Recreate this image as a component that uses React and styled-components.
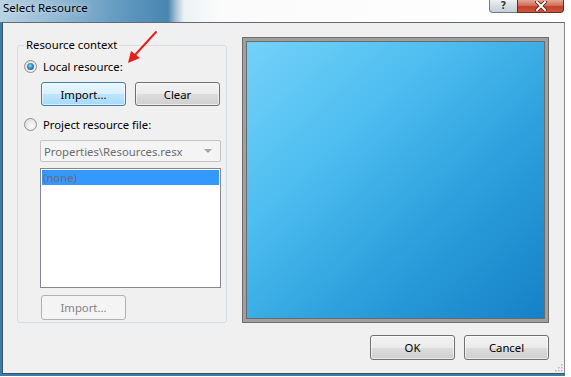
import React from 'react';
import styled, { createGlobalStyle } from 'styled-components';

const GlobalStyle = createGlobalStyle`
  html, body {
    margin: 0;
    padding: 0;
    background: #ffffff;
  }
  body {
    width: 571px;
    height: 377px;
    overflow: hidden;
    font-family: "Segoe UI", "Noto Sans", "Liberation Sans", sans-serif;
    font-size: 11.3px;
    color: #000;
  }
  * { box-sizing: border-box; }
`;

function App() {
  return (
    <>
      <GlobalStyle />
      <Window>
        <TitleBar>
          <Title>Select Resource</Title>
          <CaptionButtons>
            <HelpButton>?</HelpButton>
            <CloseButton aria-label="Close">
              <svg width="12" height="10" viewBox="0 0 12 10">
                <path d="M2 1 L10 9 M10 1 L2 9" stroke="#5a1a10" strokeWidth="3.6" strokeLinecap="square" />
                <path d="M2 1 L10 9 M10 1 L2 9" stroke="#ffffff" strokeWidth="2" strokeLinecap="square" />
              </svg>
            </CloseButton>
          </CaptionButtons>
        </TitleBar>
        <Frame>
          <Client>
            <TopRow>
              <GroupBox>
                <Legend>Resource context</Legend>
                <RadioRow>
                  <Radio checked />
                  <span>Local resource:</span>
                </RadioRow>
                <ButtonRow>
                  <Button primary>Import...</Button>
                  <Button>Clear</Button>
                </ButtonRow>
                <RadioRow spaced>
                  <Radio />
                  <span>Project resource file:</span>
                </RadioRow>
                <Indent>
                  <Combo>
                    <span>Properties\Resources.resx</span>
                    <Caret />
                  </Combo>
                  <ListBox>
                    <ListItem selected>(none)</ListItem>
                  </ListBox>
                  <Button disabled>Import...</Button>
                </Indent>
              </GroupBox>
              <Preview>
                <PreviewImage />
              </Preview>
            </TopRow>
            <DialogButtons>
              <Button wide>OK</Button>
              <Button wide>Cancel</Button>
            </DialogButtons>
            <Grip width="9" height="9" viewBox="0 0 9 9">
              {[[7, 1], [4, 4], [7, 4], [1, 7], [4, 7], [7, 7]].map(([x, y], i) => (
                <rect key={i} x={x} y={y} width="1.5" height="1.5" fill="#b8b8b8" />
              ))}
            </Grip>
          </Client>
        </Frame>
        <Arrow width="40" height="40" viewBox="0 0 40 40">
          <line x1="35" y1="2" x2="14" y2="25" stroke="#e51e1e" strokeWidth="2" strokeLinecap="round" />
          <polygon points="7,33 10,21 19,28" fill="#e51e1e" />
        </Arrow>
      </Window>
    </>
  );
}

export default App;

const Window = styled.div`
  position: relative;
  width: 565px;
  display: flex;
  flex-direction: column;
`;

const TitleBar = styled.div`
  height: 22px;
  display: flex;
  align-items: flex-start;
  background: linear-gradient(
    to right,
    #b7d2e3 0px,
    #8fb8d3 60px,
    #5c95bd 130px,
    #4886b0 168px,
    #a9c2d3 176px,
    #eef2f5 184px,
    #fbfbfb 220px,
    #ffffff 100%
  );
`;

const Title = styled.div`
  padding-left: 3px;
  line-height: 15px;
  font-size: 11.5px;
  color: #000;
  text-shadow: 0 0 6px rgba(255, 255, 255, 0.8);
`;

const CaptionButtons = styled.div`
  display: flex;
  margin-left: auto;
  margin-right: 1px;
`;

const HelpButton = styled.div`
  width: 28px;
  height: 13px;
  border: 1px solid #6f7c88;
  border-top: none;
  border-right: none;
  border-radius: 0 0 0 4px;
  background: linear-gradient(#edf1f4, #d6dde3 50%, #c5cfd7);
  color: #3a3a3a;
  font-family: "DejaVu Sans", sans-serif;
  font-size: 10px;
  font-weight: bold;
  line-height: 12px;
  text-align: center;
  text-shadow: 0 0 2px #fff;
`;

const CloseButton = styled.div`
  width: 47px;
  height: 13px;
  display: flex;
  align-items: center;
  justify-content: center;
  border: 1px solid #6b2a20;
  border-top: none;
  border-radius: 0 0 4px 0;
  background: linear-gradient(#e4a595, #d0705c 45%, #c2402b 55%, #d2563e);
`;

const Frame = styled.div`
  border-left: 2px solid #3d7dab;
  border-bottom: 2px solid #3d7dab;
`;

const Client = styled.div`
  position: relative;
  height: 352px;
  background: #f0f0f0;
  border-top: 1px solid #5f6c78;
  border-left: 1px solid #3e4f5e;
  border-right: 1px solid #8c8c8c;
  border-bottom: 1px solid #3e4f5e;
  padding: 14px 15px 0 14px;
  display: flex;
  flex-direction: column;
`;

const TopRow = styled.div`
  display: flex;
  align-items: flex-start;
  gap: 15px;
`;

const GroupBox = styled.div`
  position: relative;
  width: 210px;
  height: 278px;
  margin-top: 8px;
  border: 1px solid #d5dfe5;
  border-radius: 3px;
  padding: 12px 0 0 6px;
  display: flex;
  flex-direction: column;
`;

const Legend = styled.div`
  position: absolute;
  top: -9px;
  left: 6px;
  padding: 0 2px;
  line-height: 16px;
  background: #f0f0f0;
`;

const RadioRow = styled.div`
  display: flex;
  align-items: center;
  gap: 6px;
  height: 16px;
  margin-top: ${(p) => (p.spaced ? '10px' : '0')};
`;

const Radio = styled.span`
  position: relative;
  width: 13px;
  height: 13px;
  border-radius: 50%;
  border: 1px solid #8e8f8f;
  background: radial-gradient(circle at 60% 65%, #fbfbfb, #d9d9d9);
  flex-shrink: 0;

  &::after {
    content: '';
    display: ${(p) => (p.checked ? 'block' : 'none')};
    position: absolute;
    left: 2px;
    top: 2px;
    width: 7px;
    height: 7px;
    border-radius: 50%;
    background: radial-gradient(circle at 45% 40%, #a6e1fb 0, #3a9ad6 35%, #1b4f87 90%);
  }
`;

const ButtonRow = styled.div`
  display: flex;
  gap: 9px;
  margin: 8px 0 0 17px;
`;

const Button = styled.div`
  width: 85px;
  display: flex;
  align-items: center;
  justify-content: center;
  border-radius: 3px;
  border: 1px solid ${(p) => (p.primary ? '#3c7fb1' : p.disabled ? '#adb2b5' : '#707070')};
  color: ${(p) => (p.disabled ? '#838383' : '#000')};
  background: ${(p) =>
    p.primary
      ? 'linear-gradient(#eaf6fd, #d9f0fc 50%, #bee6fd 50%, #a7d9f5)'
      : p.disabled
      ? '#f4f4f4'
      : 'linear-gradient(#f2f2f2, #ebebeb 50%, #dddddd 50%, #cfcfcf)'};
  box-shadow: ${(p) => (p.disabled ? 'none' : 'inset 0 0 0 1px rgba(255,255,255,0.6)')};
  margin-top: ${(p) => (p.disabled ? '7px' : '0')};
  margin-left: ${(p) => (p.disabled ? '1px' : '0')};
  height: ${(p) => (p.disabled || p.wide ? '25px' : '24px')};
`;

const Indent = styled.div`
  display: flex;
  flex-direction: column;
  margin: 8px 0 0 16px;
`;

const Combo = styled.div`
  width: 181px;
  height: 22px;
  display: flex;
  align-items: center;
  justify-content: space-between;
  padding: 0 8px 0 3px;
  border: 1px solid #c3c3c3;
  border-radius: 2px;
  background: #f4f4f4;
  color: #6d6d6d;
`;

const Caret = styled.span`
  width: 0;
  height: 0;
  border-left: 4px solid transparent;
  border-right: 4px solid transparent;
  border-top: 4px solid #a5a5a5;
`;

const ListBox = styled.div`
  width: 181px;
  height: 120px;
  margin-top: 6px;
  border: 1px solid #828790;
  background: #ffffff;
  padding: 1px;
`;

const ListItem = styled.div`
  height: 15px;
  line-height: 15px;
  padding-left: 1px;
  color: #6d6d6d;
  background: ${(p) => (p.selected ? '#3399ff' : 'transparent')};
`;

const Preview = styled.div`
  width: 308px;
  height: 286px;
  border: 1px solid #6d6d6d;
  background: #a0a0a0;
  padding: 3px;
  display: flex;
`;

const PreviewImage = styled.div`
  flex: 1;
  border: 1px solid #6a6a6a;
  background: linear-gradient(to bottom right, #74d2f9 0%, #4cbcef 35%, #2c9fdc 65%, #1581c6 100%);
`;

const DialogButtons = styled.div`
  display: flex;
  justify-content: flex-end;
  gap: 9px;
  margin-top: 12px;
`;

const Grip = styled.svg`
  position: absolute;
  right: 1px;
  bottom: 1px;
`;

const Arrow = styled.svg`
  position: absolute;
  left: 121px;
  top: 30px;
`;
